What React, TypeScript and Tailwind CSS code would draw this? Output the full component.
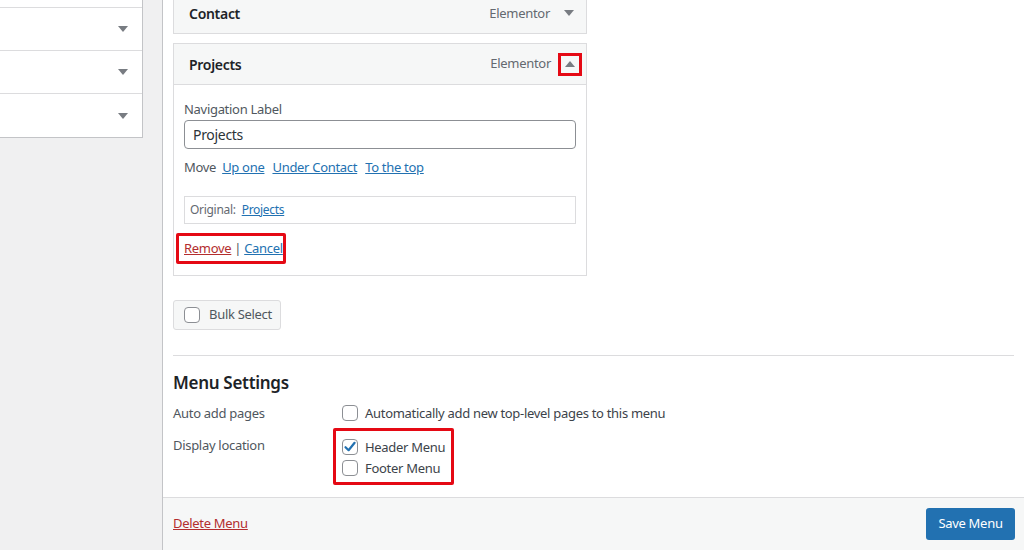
import React from "react";

const font = { fontFamily: '"Noto Sans", "Open Sans", sans-serif' };

function Arrow({ up = false }: { up?: boolean }) {
  return (
    <svg width="10" height="6" viewBox="0 0 10 6" className="block">
      {up ? (
        <path d="M0 6 L5 0 L10 6 Z" fill="#787c82" />
      ) : (
        <path d="M0 0 L10 0 L5 6 Z" fill="#787c82" />
      )}
    </svg>
  );
}

function Checkbox({ checked = false }: { checked?: boolean }) {
  return (
    <span className="relative flex h-4 w-4 shrink-0 items-center justify-center rounded-[4px] border border-[#8c8f94] bg-white">
      {checked && (
        <svg width="14" height="14" viewBox="0 0 14 14" className="absolute">
          <path d="M2.5 7.2 L5.6 10.2 L11.6 2.8" fill="none" stroke="#2271b1" strokeWidth="2.2" strokeLinecap="round" strokeLinejoin="round" />
        </svg>
      )}
    </span>
  );
}

function LeftPanel() {
  const rows = [0, 1, 2];
  return (
    <div className="w-[162px] shrink-0 bg-[#f0f0f1]">
      <div className="w-[143px] border-r border-b border-[#c3c4c7] bg-white">
        <div className="h-2 border-b border-[#dcdcde]" />
        {rows.map((r) => (
          <div
            key={r}
            className={`flex h-[43px] items-center justify-end pr-[14px] ${r < 2 ? "border-b border-[#dcdcde]" : ""}`}
          >
            <Arrow />
          </div>
        ))}
      </div>
    </div>
  );
}

export default function App() {
  return (
    <div
      className="flex h-[550px] w-[1024px] overflow-hidden bg-[#f0f0f1] text-[13px] tracking-[-0.3px] text-[#3c434a]"
      style={font}
    >
      <LeftPanel />
      <div className="flex flex-1 flex-col border-l border-[#c3c4c7] bg-white">
        <div className="flex-1 px-[10px]">
          {/* Contact item */}
          <div className="-mt-2 w-[414px] border border-[#dcdcde] bg-[#f6f7f7]">
            <div className="flex h-[40px] items-center pl-[15px] pr-[12px]">
              <span className="text-[14px] font-semibold text-[#1d2327]">Contact</span>
              <span className="ml-auto pt-[2px] text-[#646970]">Elementor</span>
              <span className="ml-[14px]">
                <Arrow />
              </span>
            </div>
          </div>

          {/* Projects item */}
          <div className="mt-[9px] w-[414px] border border-[#dcdcde]">
            <div className="flex h-[41px] items-center border-b border-[#dcdcde] bg-[#f6f7f7] pl-[15px] pr-[4px]">
              <span className="text-[14px] font-semibold text-[#1d2327]">Projects</span>
              <span className="ml-auto text-[#646970]">Elementor</span>
              <span className="ml-[7px] flex h-[23px] w-[24px] items-center justify-center border-[3px] border-[#e50914]">
                <Arrow up />
              </span>
            </div>
            <div className="px-[10px] pt-[14px] pb-[16px]">
              <div className="leading-5 text-[#50575e]">Navigation Label</div>
              <div className="mt-[1px] flex h-[29px] items-center rounded-[4px] border border-[#8c8f94] px-2 text-[14px] text-[#2c3338]">
                Projects
              </div>
              <div className="mt-[8px] flex items-center leading-5">
                <span className="text-[#50575e]">Move</span>
                <a className="ml-[6px] text-[#2271b1] underline">Up one</a>
                <a className="ml-[8px] text-[#2271b1] underline">Under Contact</a>
                <a className="ml-[8px] text-[#2271b1] underline">To the top</a>
              </div>
              <div className="mt-[19px] flex h-[28px] items-center border border-[#dcdcde] px-[5px] text-[12px]">
                <span className="text-[#646970]">Original:</span>
                <a className="ml-[6px] text-[#2271b1] underline">Projects</a>
              </div>
              <div className="relative mt-[14px] inline-flex leading-5">
                <span className="pointer-events-none absolute -left-[8px] -right-[3px] -top-[5px] -bottom-[6px] rounded-[2px] border-[3px] border-[#e50914]" />
                <a className="text-[#b32d2e] underline">Remove</a>
                <span className="mx-[3px] text-[#50575e]">|</span>
                <a className="text-[#2271b1] underline">Cancel</a>
              </div>
            </div>
          </div>

          {/* Bulk select */}
          <div className="mt-[24px] flex h-[30px] w-[108px] items-center gap-[9px] rounded-[3px] border border-[#dcdcde] bg-[#f6f7f7] pl-[10px] text-[#50575e]">
            <Checkbox />
            <span>Bulk Select</span>
          </div>

          <div className="mt-[25px] border-t border-[#dcdcde]" />

          {/* Menu settings */}
          <h3 className="mt-[15px] text-[17px] font-semibold leading-6 text-[#1d2327]">Menu Settings</h3>
          <div className="mt-[8px] flex items-center leading-5">
            <span className="w-[169px] text-[#50575e]">Auto add pages</span>
            <div className="flex items-center gap-[7px]">
              <Checkbox />
              <span>Automatically add new top-level pages to this menu</span>
            </div>
          </div>
          <div className="mt-[12px] flex items-start leading-5">
            <span className="w-[169px] text-[#50575e]">Display location</span>
            <div className="relative flex flex-col gap-[1px] pt-[2px]">
              <span className="pointer-events-none absolute -left-[9px] -top-[7px] h-[57px] w-[121px] rounded-[2px] border-[3px] border-[#e50914]" />
              <div className="flex items-center gap-[7px]">
                <Checkbox checked />
                <span>Header Menu</span>
              </div>
              <div className="flex items-center gap-[7px]">
                <Checkbox />
                <span>Footer Menu</span>
              </div>
            </div>
          </div>
        </div>

        {/* Footer */}
        <div className="flex h-[53px] items-center border-t border-[#dcdcde] bg-[#f6f7f7] pl-[10px] pr-[9px]">
          <a className="text-[#b32d2e] underline">Delete Menu</a>
          <button className="ml-auto h-[32px] w-[89px] rounded-[3px] bg-[#2271b1] text-[13px] tracking-[-0.3px] text-white">
            Save Menu
          </button>
        </div>
      </div>
    </div>
  );
}
